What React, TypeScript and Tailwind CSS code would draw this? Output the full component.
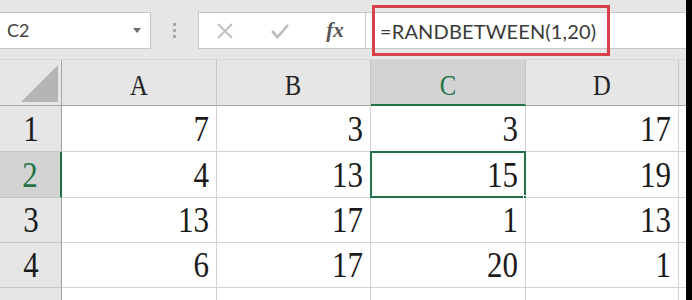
import { ReactNode } from "react";

const SERIF = "font-['Liberation_Serif',serif]";

const columns = ["A", "B", "C", "D"];
const rows = [
  { n: 1, values: [7, 3, 3, 17] },
  { n: 2, values: [4, 13, 15, 19] },
  { n: 3, values: [13, 17, 1, 13] },
  { n: 4, values: [6, 17, 20, 1] },
];
const rowHeights = ["h-[46px]", "h-[46px]", "h-[45px]", "h-[45px]"];

function NameBox() {
  return (
    <div className="w-[151px] h-[37px] bg-white border border-l-0 border-[#c6c6c6] flex items-center justify-between pl-[7px] pr-[9px]">
      <span className="font-['Lato',sans-serif] text-[18px] text-[#444]">C2</span>
      <svg width="8" height="5" viewBox="0 0 8 5">
        <path d="M0 0 L8 0 L4 5 Z" fill="#6b6b6b" />
      </svg>
    </div>
  );
}

function Dots() {
  return (
    <div className="w-[47px] h-[37px] flex flex-col items-center justify-center gap-[3px]">
      <div className="w-[3px] h-[3px] bg-[#a9a9a9]" />
      <div className="w-[3px] h-[3px] bg-[#a9a9a9]" />
      <div className="w-[3px] h-[3px] bg-[#a9a9a9]" />
    </div>
  );
}

function FormulaButtons() {
  return (
    <div className="w-[168px] h-[37px] bg-white border border-[#c6c6c6] flex items-center">
      <div className="w-[52px] flex justify-center">
        <svg width="18" height="16" viewBox="0 0 18 16">
          <path d="M2 1 L16 15 M16 1 L2 15" stroke="#bdbdbd" strokeWidth="1.8" fill="none" />
        </svg>
      </div>
      <div className="w-[58px] flex justify-center">
        <svg width="20" height="16" viewBox="0 0 20 16">
          <path d="M2 8 L7.5 14 L18 2" stroke="#bdbdbd" strokeWidth="2.6" fill="none" />
        </svg>
      </div>
      <div className="flex-1 flex justify-center pr-[4px]">
        <span className={`${SERIF} italic font-bold text-[21px] text-[#555] leading-none`}>
          fx
        </span>
      </div>
    </div>
  );
}

function FormulaBar() {
  return (
    <div className="relative flex-1 h-[37px] bg-white border-y border-[#c6c6c6] flex items-center pl-[14px]">
      <span className="font-['Lato',sans-serif] text-[20px] text-[#3a3a3a] tracking-[0.15px]">
        =RANDBETWEEN(1,20)
      </span>
      {/* red highlight box drawn over the formula */}
      <div className="absolute left-[6px] top-[-8px] w-[238px] h-[51px] border-[3px] border-[#d8404a]" />
    </div>
  );
}

function HeaderCell({ children, active }: { children?: ReactNode; active?: boolean }) {
  return (
    <div
      className={
        active
          ? `h-[46px] bg-[#d3d3d3] border-r border-[#c6c6c6] border-b-2 border-b-[#217346] flex items-end justify-center pb-[4px] ${SERIF} text-[30px] leading-none text-[#217346]`
          : `h-[46px] bg-[#e6e6e6] border-r border-[#c6c6c6] border-b border-b-[#a6a6a6] flex items-end justify-center pb-[5px] ${SERIF} text-[30px] leading-none text-[#222]`
      }
    >
      <span className="inline-block scale-x-[0.82]">{children}</span>
    </div>
  );
}

function RowHeader({ n, active, h }: { n: number; active: boolean; h: string }) {
  return (
    <div
      className={
        active
          ? `${h} bg-[#d3d3d3] border-b border-[#c6c6c6] border-r-2 border-r-[#217346] flex items-end justify-center pb-[4px] ${SERIF} text-[36px] leading-none text-[#217346]`
          : `${h} bg-[#e6e6e6] border-b border-[#c6c6c6] border-r border-r-[#9e9e9e] flex items-end justify-center pb-[4px] ${SERIF} text-[36px] leading-none text-[#1a1a1a]`
      }
    >
      <span className="inline-block scale-x-[0.86]">{n}</span>
    </div>
  );
}

function Cell({ value, h, selected }: { value?: number; h: string; selected?: boolean }) {
  return (
    <div
      className={`relative ${h} bg-white border-r border-b border-[#d4d4d4] flex items-end justify-end pr-[7px] pb-[4px] ${SERIF} text-[36px] leading-none text-[#1a1a1a]`}
    >
      <span className="inline-block scale-x-[0.86] origin-right">{value}</span>
      {selected && (
        <>
          <div className="absolute left-[-1px] top-[-1px] right-[-1px] bottom-[-1px] border-2 border-[#217346]" />
          <div className="absolute right-[-4px] bottom-[-4px] w-[6px] h-[6px] bg-[#217346] border border-white" />
        </>
      )}
    </div>
  );
}

export default function App() {
  return (
    <div className="w-[692px] h-[300px] flex overflow-hidden bg-[#e6e6e6]">
      <div className="flex-1 flex flex-col">
        {/* Toolbar */}
        <div className="h-[62px] bg-[#e6e6e6] flex items-start pt-[12px] border-b border-[#d8d8d8]">
          <NameBox />
          <Dots />
          <FormulaButtons />
          <FormulaBar />
        </div>

        {/* Sheet */}
        <div className="flex-1 grid grid-cols-[62px_155px_154px_155px_153px_1fr] content-start">
          <div className="h-[46px] bg-[#e6e6e6] border-r border-b border-[#a6a6a6] flex items-end justify-end pr-[3px] pb-[3px]">
            <svg width="37" height="37" viewBox="0 0 37 37">
              <path d="M0 37 L37 0 L37 37 Z" fill="#b5b5b5" />
            </svg>
          </div>
          {columns.map((c) => (
            <HeaderCell key={c} active={c === "C"}>
              {c}
            </HeaderCell>
          ))}
          <div className="h-[46px] bg-[#e6e6e6] border-b border-[#a6a6a6]" />

          {rows.map((r, ri) => (
            <div key={r.n} className="contents">
              <RowHeader n={r.n} active={r.n === 2} h={rowHeights[ri]} />
              {r.values.map((v, ci) => (
                <Cell key={ci} value={v} h={rowHeights[ri]} selected={r.n === 2 && ci === 2} />
              ))}
              <div className={`${rowHeights[ri]} bg-white border-b border-[#d4d4d4]`} />
            </div>
          ))}

          <div className="h-[12px] bg-[#e6e6e6] border-r border-r-[#9e9e9e]" />
          <div className="h-[12px] bg-white border-r border-[#d4d4d4]" />
          <div className="h-[12px] bg-white border-r border-[#d4d4d4]" />
          <div className="h-[12px] bg-white border-r border-[#d4d4d4]" />
          <div className="h-[12px] bg-white border-r border-[#d4d4d4]" />
          <div className="h-[12px] bg-white" />
        </div>
      </div>
      <div className="w-[6px] bg-black" />
    </div>
  );
}
